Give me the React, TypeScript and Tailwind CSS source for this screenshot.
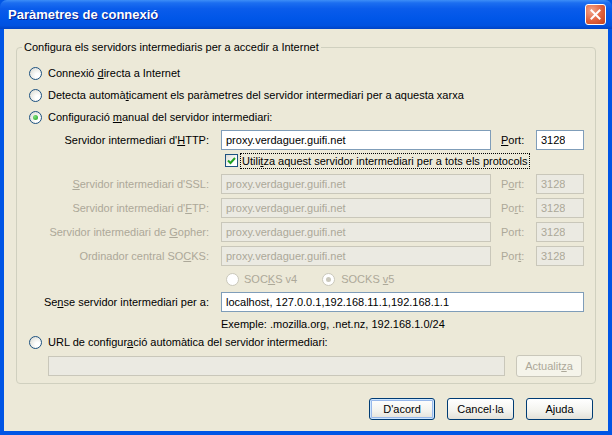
import type { ReactNode } from "react"

const FONT = "font-['Liberation_Sans',Arial,sans-serif]"

function Radio({ checked = false, disabled = false }: { checked?: boolean; disabled?: boolean }) {
  return (
    <span
      className={`flex h-[13px] w-[13px] shrink-0 items-center justify-center rounded-full border ${
        disabled
          ? "border-[#CAC8BB] bg-white"
          : "border-[#1C5180] bg-[radial-gradient(circle_at_70%_70%,#FFFFFF_20%,#E6E6E0_70%,#D4D4CC_100%)]"
      }`}
    >
      {checked && (
        <span
          className={`h-[5px] w-[5px] rounded-full ${
            disabled ? "bg-[#CAC8BB]" : "bg-[radial-gradient(circle_at_35%_35%,#7CE07A,#21A121)]"
          }`}
        />
      )}
    </span>
  )
}

function Checkbox() {
  return (
    <span className="flex h-[13px] w-[13px] shrink-0 items-center justify-center border border-[#1C5180] bg-[linear-gradient(135deg,#DCDCD7,#FFFFFF_70%)]">
      <svg width="9" height="9" viewBox="0 0 9 9">
        <path d="M1 4.5 L3.5 7 L8 2" fill="none" stroke="#21A121" strokeWidth="2" />
      </svg>
    </span>
  )
}

function Field({ value = "", disabled = false, width }: { value?: string; disabled?: boolean; width: string }) {
  return (
    <div
      className={`flex h-[20px] shrink-0 items-center border px-[4px] ${width} ${
        disabled ? "border-[#C9C7BA] bg-[#EBEAE2] text-[#ACA899]" : "border-[#7F9DB9] bg-white text-black"
      }`}
    >
      <span className="truncate">{value}</span>
    </div>
  )
}

function ProxyRow({
  label,
  value,
  port,
  disabled = false,
}: {
  label: ReactNode
  value: string
  port: ReactNode
  disabled?: boolean
}) {
  return (
    <div className={`flex items-center ${disabled ? "text-[#ACA899]" : "text-black"}`}>
      <span className="w-[181px] shrink-0 pr-[1px] text-right">{label}</span>
      <span className="w-[11px] shrink-0" />
      <Field value={value} disabled={disabled} width="w-[270px]" />
      <span className="w-[10px] shrink-0" />
      <span className="w-[35px] shrink-0">{port}</span>
      <Field value="3128" disabled={disabled} width="w-[48px]" />
    </div>
  )
}

function XpButton({ children, isDefault = false, disabled = false, width }: { children: ReactNode; isDefault?: boolean; disabled?: boolean; width: string }) {
  return (
    <button
      className={`flex h-[22px] items-center justify-center rounded-[3px] border ${width} ${
        disabled
          ? "border-[#C9C7BA] bg-[#F5F4EA] text-[#ACA899]"
          : "border-[#003C74] bg-[linear-gradient(to_bottom,#FFFFFF,#F3F3EE_60%,#E3E1D8_100%)] text-black"
      } ${isDefault ? "shadow-[inset_0_0_0_1px_#CEE7FF,inset_0_0_0_2px_#98B8EA]" : ""}`}
    >
      {children}
    </button>
  )
}

export default function App() {
  return (
    <div className={`${FONT} flex h-[435px] w-[612px] flex-col bg-[#0055E5] text-[11px] leading-[13px] text-black`}>
      {/* title bar */}
      <div className="flex h-[29px] shrink-0 items-center justify-between rounded-t-[7px] bg-[linear-gradient(to_bottom,#3D8EF7_0%,#1C6EF0_10%,#0A5CEB_30%,#0056E8_65%,#0052E0_88%,#0043C5_100%)] pl-[8px] pr-[6px]">
        <span className="text-[13px] font-bold text-white [text-shadow:1px_1px_0_#0A1E8C]">Paràmetres de connexió</span>
        <span className="flex h-[21px] w-[21px] items-center justify-center rounded-[3px] border border-white bg-[radial-gradient(circle_at_30%_30%,#F2A68C,#E0603C_55%,#C0401C)]">
          <svg width="11" height="11" viewBox="0 0 11 11">
            <path d="M1.5 1.5 L9.5 9.5 M9.5 1.5 L1.5 9.5" stroke="white" strokeWidth="2" strokeLinecap="square" />
          </svg>
        </span>
      </div>

      {/* body */}
      <div className="mx-[4px] mb-[4px] flex flex-1 flex-col bg-[#ECE9D8] pl-[12px] pr-[15px] pt-[11px]">
        <fieldset className="w-[580px] rounded-[4px] border border-[#D0D0BF] pb-[6px]">
          <legend className="ml-[5px] px-[2px] leading-[14px]">Configura els servidors intermediaris per a accedir a Internet</legend>

          <div className="pl-[12px]">
            <div className="mt-[8px] flex h-[22px] items-center gap-[6px]">
              <Radio />
              <span>
                Connexió <u>d</u>irecta a Internet
              </span>
            </div>
            <div className="flex h-[22px] items-center gap-[6px]">
              <Radio />
              <span>
                Detecta automà<u>t</u>icament els paràmetres del servidor intermediari per a aquesta xarxa
              </span>
            </div>
            <div className="flex h-[22px] items-center gap-[6px]">
              <Radio checked />
              <span>
                Configuració <u>m</u>anual del servidor intermediari:
              </span>
            </div>

            <div className="mt-[2px]">
              <ProxyRow
                label={<>Servidor intermediari d'<u>H</u>TTP:</>}
                value="proxy.verdaguer.guifi.net"
                port={<><u>P</u>ort:</>}
              />
            </div>

            <div className="flex h-[21px] items-center pl-[196px]">
              <Checkbox />
              <span className="ml-[2px] border border-dotted border-black px-[1px] leading-[14px]">
                Utili<u>t</u>za aquest servidor intermediari per a tots els protocols
              </span>
            </div>

            <div className="mt-[3px] flex flex-col gap-[4px]">
              <ProxyRow disabled label={<><u>S</u>ervidor intermediari d'SSL:</>} value="proxy.verdaguer.guifi.net" port={<>P<u>o</u>rt:</>} />
              <ProxyRow disabled label={<>Servidor intermediari d'<u>F</u>TP:</>} value="proxy.verdaguer.guifi.net" port={<>Po<u>r</u>t:</>} />
              <ProxyRow disabled label={<>Servidor intermediari de <u>G</u>opher:</>} value="proxy.verdaguer.guifi.net" port={<>Port:</>} />
              <ProxyRow disabled label={<>Ordinador central SO<u>C</u>KS:</>} value="proxy.verdaguer.guifi.net" port={<>Por<u>t</u>:</>} />
            </div>

            <div className="mt-[3px] flex h-[20px] items-center pl-[197px] text-[#ACA899]">
              <Radio disabled />
              <span className="ml-[5px]">
                SOC<u>K</u>S v4
              </span>
              <span className="ml-[25px]">
                <Radio disabled checked />
              </span>
              <span className="ml-[6px]">
                SOCKS <u>v</u>5
              </span>
            </div>

            <div className="mt-[3px] flex items-center">
              <span className="w-[181px] shrink-0 pr-[1px] text-right">
                Se<u>n</u>se servidor intermediari per a:
              </span>
              <span className="w-[11px] shrink-0" />
              <Field value="localhost, 127.0.0.1,192.168.11.1,192.168.1.1" width="w-[363px]" />
            </div>

            <div className="mt-[3px] flex h-[18px] items-center pl-[192px]">Exemple: .mozilla.org, .net.nz, 192.168.1.0/24</div>

            <div className="flex h-[18px] items-center gap-[6px]">
              <Radio />
              <span>
                URL de configur<u>a</u>ció automàtica del servidor intermediari:
              </span>
            </div>

            <div className="mt-[4px] flex items-center pl-[19px]">
              <Field disabled width="w-[457px]" />
              <span className="w-[11px] shrink-0" />
              <XpButton disabled width="w-[66px]">
                Actualit<u>z</u>a
              </XpButton>
            </div>
          </div>
        </fieldset>

        <div className="mt-[14px] flex justify-end gap-[12px]">
          <XpButton isDefault width="w-[66px]">D'acord</XpButton>
          <XpButton width="w-[67px]">Cancel·la</XpButton>
          <XpButton width="w-[67px]">Ajuda</XpButton>
        </div>
      </div>
    </div>
  )
}
